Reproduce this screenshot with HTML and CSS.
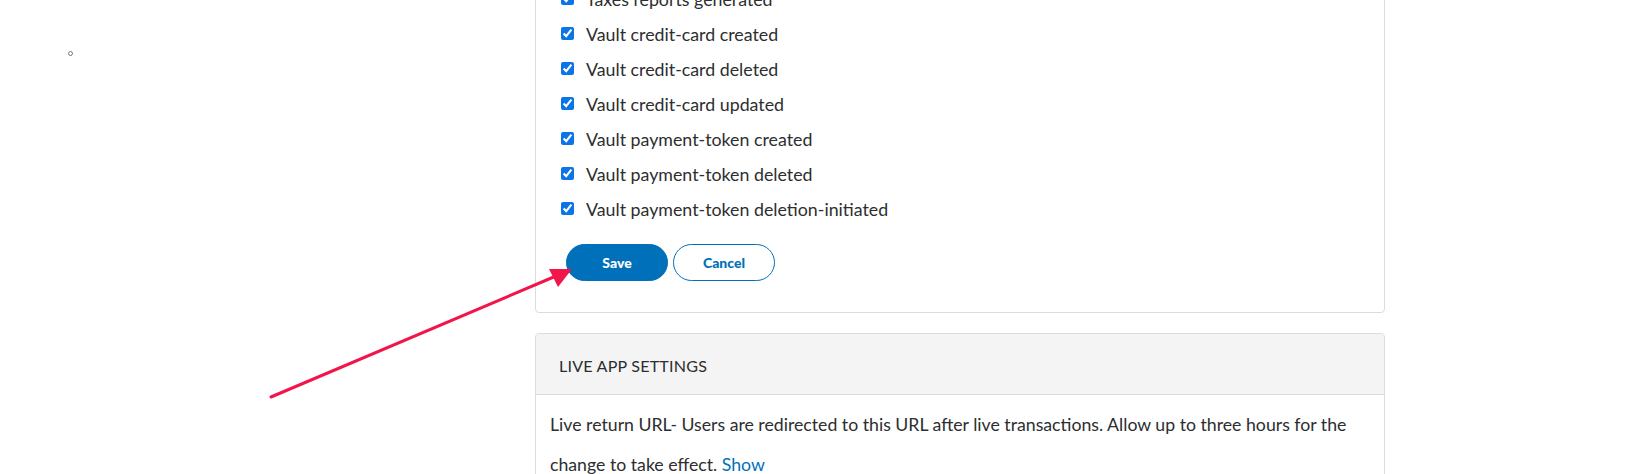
FILE: index.html
```html
<!DOCTYPE html>
<html>
<head>
<meta charset="utf-8">
<link rel="stylesheet" href="styles.css">
</head>
<body>
<div class="page">
  <div class="side"><span class="dot"></span></div>
  <div class="main">
    <div class="card events">
      <ul class="list">
        <li><input type="checkbox" checked><span>Taxes reports generated</span></li>
        <li><input type="checkbox" checked><span>Vault credit-card created</span></li>
        <li><input type="checkbox" checked><span>Vault credit-card deleted</span></li>
        <li><input type="checkbox" checked><span>Vault credit-card updated</span></li>
        <li><input type="checkbox" checked><span>Vault payment-token created</span></li>
        <li><input type="checkbox" checked><span>Vault payment-token deleted</span></li>
        <li><input type="checkbox" checked><span>Vault payment-token deletion-initiated</span></li>
      </ul>
      <div class="actions">
        <button class="btn primary">Save</button>
        <button class="btn secondary">Cancel</button>
      </div>
    </div>
    <div class="card live">
      <div class="card-head">LIVE APP SETTINGS</div>
      <div class="card-body">
        <p>Live return URL- Users are redirected to this URL after live transactions. Allow up to three hours for the change to take effect. <a href="#" class="link">Show</a></p>
      </div>
    </div>
  </div>
</div>
<svg class="arrow" width="1627" height="474" viewBox="0 0 1627 474">
  <line x1="271" y1="397" x2="556" y2="276" stroke="#f2154a" stroke-width="3" stroke-linecap="round"/>
  <polygon points="572,269 549,269 558,287" fill="#f2154a"/>
</svg>
</body>
</html>
```
FILE: styles.css
```css
* { box-sizing: border-box; }
html, body { margin: 0; padding: 0; background: #fff; }
body {
  font-family: Lato, "Noto Sans", sans-serif;
  color: #2c2e2f;
  overflow: hidden;
  height: 474px;
}
.page {
  display: flex;
  align-items: flex-start;
}
.side {
  width: 535px;
  flex: none;
  padding: 51px 0 0 68px;
}
.dot {
  display: block;
  width: 5px;
  height: 5px;
  border: 1px solid #777;
  border-radius: 50%;
}
.main {
  width: 850px;
  flex: none;
  margin-top: -20px;
  display: flex;
  flex-direction: column;
  gap: 20px;
}
.card {
  border: 1px solid #dcdcdc;
  border-radius: 4px;
  background: #fff;
}
.events {
  padding: 0 0 31px 25px;
}
.list {
  list-style: none;
  margin: 0;
  padding: 0;
}
.list li {
  height: 35px;
  display: flex;
  align-items: center;
  font-size: 17.8px;
}
.list input {
  width: 13px;
  height: 13px;
  margin: 0 12px 0 0;
  accent-color: #0b75e8;
}
.actions {
  display: flex;
  gap: 5px;
  margin-top: 18px;
  padding-left: 5px;
}
.btn {
  width: 102px;
  height: 37px;
  border-radius: 19px;
  font-family: Lato, "Noto Sans", sans-serif;
  font-weight: 900;
  font-size: 14px;
  cursor: pointer;
}
.primary {
  background: #0070ba;
  border: 1px solid #0070ba;
  color: #fff;
}
.secondary {
  background: #fff;
  border: 1px solid #0070ba;
  color: #0070ba;
}
.card-head {
  height: 61px;
  background: #f4f4f4;
  border-bottom: 1px solid #dcdcdc;
  display: flex;
  align-items: center;
  padding: 2px 0 0 23px;
  font-size: 16.1px;
  letter-spacing: 0.2px;
  border-radius: 4px 4px 0 0;
}
.card-body {
  padding: 10px 20px 0 14px;
}
.card-body p {
  margin: 0;
  font-size: 17.7px;
  line-height: 40px;
}
.link {
  color: #0070ba;
  text-decoration: none;
}
.arrow {
  position: absolute;
  left: 0;
  top: 0;
  pointer-events: none;
}
```
